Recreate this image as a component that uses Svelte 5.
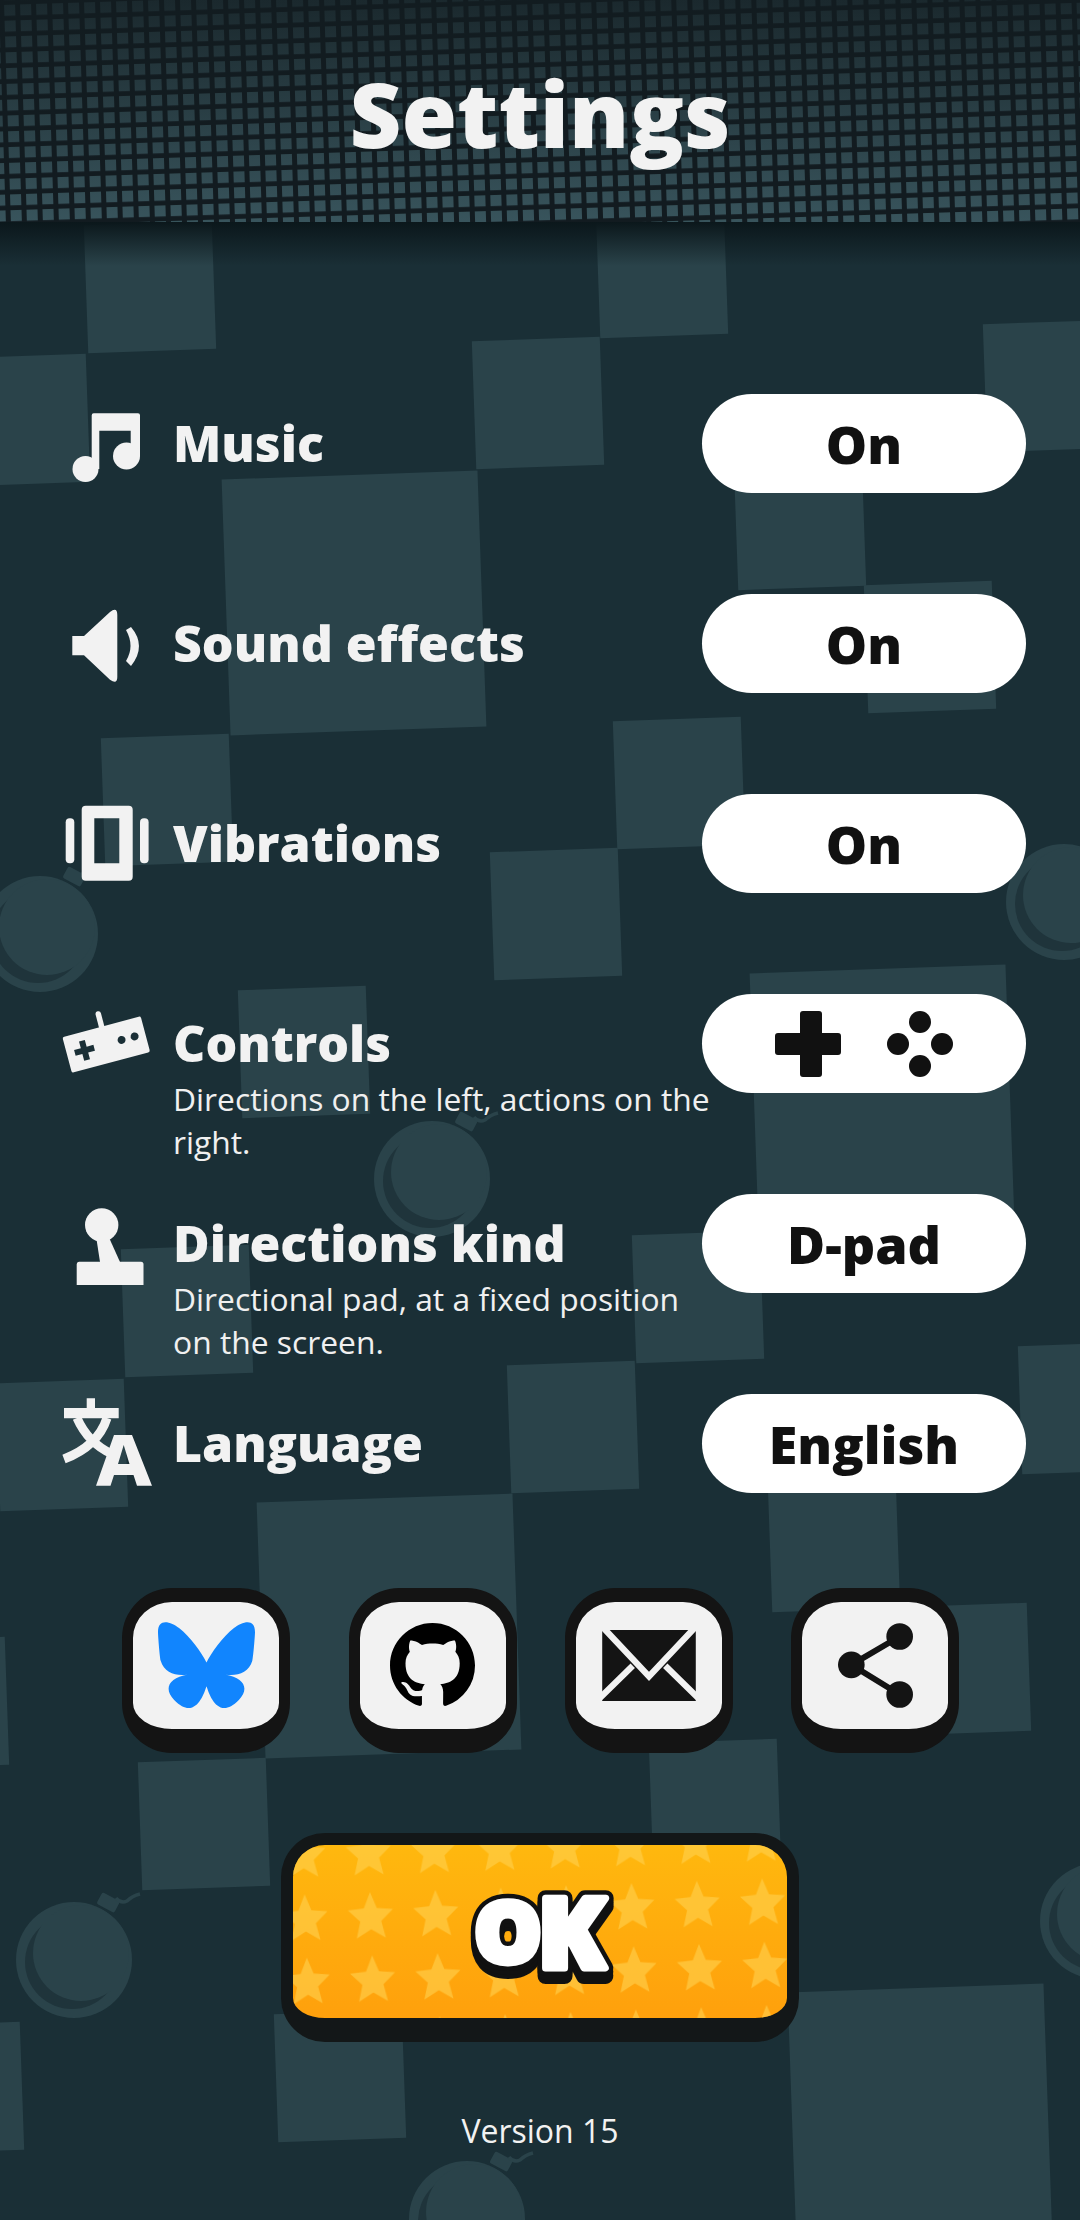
<script>
  const S = 1.4154;
  const small = [[106,203],[17,297],[380,285],[468,192],[741,273],[565,370],[657,457],[118,565],[480,553],[393,646],[215,743],[493,916],[132,926],[44,1021],[405,1008],[766,995],[589,1092],[682,1179],[-40,1203],[144,1289],[505,1275],[240,1467],[-30,1475]];
  const big = [[250,426],[623,775],[275,1149],[650,1495]];
  const squares = [
    ...small.map(([x,y]) => ({ x: x*S - 64, y: y*S - 64, s: 128 })),
    ...big.map(([x,y]) => ({ x: x*S - 128, y: y*S - 128, s: 256 }))
  ];
  const bombs = [[28,660],[305,833],[752,637],[52,1385],[776,1357],[330,1568]].map(([x,y]) => ({ x: x*S - 70, y: y*S - 70 }));
</script>

<div class="page">
  <div class="decor" aria-hidden="true">
    {#each squares as q}
      <div class="sq" style="left:{q.x}px;top:{q.y}px;width:{q.s}px;height:{q.s}px"></div>
    {/each}
    {#each bombs as b}
      <svg class="bomb" style="left:{b.x}px;top:{b.y}px" width="140" height="140" viewBox="-70 -70 140 140">
        <circle r="58" fill="#2a434a"/>
        <circle cx="-2" cy="2" r="47" fill="#1f343b"/>
        <circle cx="7" cy="-7" r="48" fill="#2a434a"/>
        <rect x="24" y="-64" width="20" height="13" rx="2" transform="rotate(28 34 -57)" fill="#2a434a"/>
        <path d="M42 -62 Q47 -56 53 -59 Q58 -64 66 -66" fill="none" stroke="#2a434a" stroke-width="3.500"/>
      </svg>
    {/each}
  </div>

  <header class="head">
    <svg class="dots" width="1080" height="222" aria-hidden="true">
      <defs>
        <pattern id="grid" width="16" height="15.800" patternUnits="userSpaceOnUse" patternTransform="translate(2,3) rotate(-1.800)">
          <rect x="2" y="2" width="11" height="11" fill="#38545c"/>
        </pattern>
        <linearGradient id="fade" x1="0" y1="0" x2="0" y2="1">
          <stop offset="0" stop-color="#121c20" stop-opacity=".78"/>
          <stop offset="1" stop-color="#121c20" stop-opacity="0"/>
        </linearGradient>
      </defs>
      <rect width="1080" height="222" fill="#121b20"/>
      <rect width="1080" height="222" fill="url(#grid)"/>
      <rect width="1080" height="222" fill="url(#fade)"/>
    </svg>
    <h1>Settings</h1>
  </header>
  <div class="head-shadow"></div>

  <main class="content">
    <section class="rows">
      <div class="row">
        <svg class="ico" viewBox="0 0 100 99">
          <path d="M31.7 75V21.3a2 2 0 0 1 2-2H78a2 2 0 0 1 2 2V62H70.7V36.7H39.3V75Z"/>
          <circle cx="25.5" cy="75" r="13"/><circle cx="66.5" cy="62" r="13.5"/>
        </svg>
        <div class="txt"><div class="lbl">Music</div></div>
        <button class="pill">On</button>
      </div>

      <div class="row">
        <svg class="ico" viewBox="0 0 100 99">
          <path d="M12.3 42H24L50 18Q57.3 12.500 57.300 21V83Q57.300 91 50 85.700L24 61.300H12.300Z"/>
          <path d="M66 36L71 33Q87 52 71 72L66 67Q75 52 66 36Z"/>
        </svg>
        <div class="txt"><div class="lbl">Sound effects</div></div>
        <button class="pill">On</button>
      </div>

      <div class="row">
        <svg class="ico" viewBox="0 0 100 99">
          <path fill-rule="evenodd" d="M25.700 11.700H68.700a4 4 0 0 1 4 4V82.700a4 4 0 0 1-4 4H25.700a4 4 0 0 1-4-4V15.700a4 4 0 0 1 4-4ZM34.300 24.300V69.300H59.300V24.300Z"/>
          <rect x="5.700" y="24.300" width="8.600" height="45" rx="4"/>
          <rect x="80" y="24.300" width="8.600" height="45" rx="4"/>
        </svg>
        <div class="txt"><div class="lbl">Vibrations</div></div>
        <button class="pill">On</button>
      </div>

      <div class="row">
        <svg class="ico" viewBox="0 0 100 99">
          <path d="M38.300 20L41.700 33" stroke="#f2f2f2" stroke-width="5.500" stroke-linecap="round"/>
          <g transform="rotate(-15 46.500 51.500)">
            <path fill-rule="evenodd" d="M8 32H85a2 2 0 0 1 2 2V67a2 2 0 0 1-2 2H8a2 2 0 0 1-2-2V34a2 2 0 0 1 2-2ZM21 40.500V47.500H14V53.500H21V60.500H27V53.500H34V47.500H27V40.500ZM62.500 46a4 4 0 1 0 .01 0ZM76 46a4 4 0 1 0 .01 0Z"/>
          </g>
        </svg>
        <div class="txt">
          <div class="lbl">Controls</div>
          <p class="desc">Directions on the left, actions on the right.</p>
        </div>
        <button class="pill">
          <svg class="pad" width="178" height="66" viewBox="0 0 178 66">
            <path d="M25 3a3 3 0 0 1 3-3H44a3 3 0 0 1 3 3V22H63a3 3 0 0 1 3 3V41a3 3 0 0 1-3 3H47V63a3 3 0 0 1-3 3H28a3 3 0 0 1-3-3V44H3a3 3 0 0 1-3-3V25a3 3 0 0 1 3-3H25Z"/>
            <circle cx="145" cy="11" r="11"/><circle cx="123" cy="33" r="11"/><circle cx="167" cy="33" r="11"/><circle cx="145" cy="55" r="11"/>
          </svg>
        </button>
      </div>

      <div class="row">
        <svg class="ico" viewBox="0 0 100 99">
          <circle cx="41.700" cy="31" r="16.700"/>
          <path d="M36 42H48.300L60 68H40Z"/>
          <path d="M19 67.700H81a2.500 2.500 0 0 1 2.500 2.500V91H16.700V70.200a2.500 2.500 0 0 1 2.300-2.500Z"/>
        </svg>
        <div class="txt">
          <div class="lbl">Directions kind</div>
          <p class="desc">Directional pad, at a fixed position on the screen.</p>
        </div>
        <button class="pill">D-pad</button>
      </div>

      <div class="row last">
        <svg class="ico" viewBox="0 0 100 99">
          <path d="M26.700 4.300H35V14H58.700V24.300H4V14H26.700Z"/>
          <path d="M17 24Q28 49 52 60M47 24Q38 52 4 65" fill="none" stroke="#f2f2f2" stroke-width="9"/>
          <path fill-rule="evenodd" d="M54 41H72L92 91.700H77L73.500 81H54L50.500 91.700H36ZM58 70H69.500L63.700 51Z"/>
        </svg>
        <div class="txt"><div class="lbl">Language</div></div>
        <button class="pill">English</button>
      </div>
    </section>

    <nav class="social">
      <button class="sb" aria-label="Bluesky">
        <svg width="97" height="87" viewBox="0 0 64 57"><path fill="#1185fe" d="M13.873 3.805C21.21 9.332 29.103 20.537 32 26.55v15.882c0-.338-.13.044-.41.867-1.512 4.456-7.418 21.847-20.923 7.944-7.111-7.32-3.819-14.64 9.125-16.85-7.405 1.264-15.73-.825-18.014-9.015C1.12 23.022 0 8.51 0 6.55 0-3.268 8.579-.182 13.873 3.805ZM50.127 3.805C42.79 9.332 34.897 20.537 32 26.55v15.882c0-.338.13.044.41.867 1.512 4.456 7.418 21.847 20.923 7.944 7.111-7.32 3.819-14.64-9.125-16.85 7.405 1.264 15.73-.825 18.014-9.015C62.88 23.022 64 8.51 64 6.55c0-9.818-8.578-6.732-13.873-2.745Z"/></svg>
      </button>
      <button class="sb" aria-label="GitHub">
        <svg width="85" height="85" viewBox="0 0 16 16"><path fill="#000" d="M8 0C3.58 0 0 3.58 0 8c0 3.54 2.29 6.53 5.47 7.59.4.07.55-.17.55-.38 0-.19-.01-.82-.01-1.49-2.01.37-2.53-.49-2.69-.94-.09-.23-.48-.94-.82-1.13-.28-.15-.68-.52-.01-.53.63-.01 1.08.58 1.23.82.72 1.21 1.87.87 2.33.66.07-.52.28-.87.51-1.07-1.78-.2-3.64-.89-3.64-3.95 0-.87.31-1.59.82-2.15-.08-.2-.36-1.02.08-2.12 0 0 .67-.21 2.2.82.64-.18 1.32-.27 2-.27.68 0 1.36.09 2 .27 1.53-1.04 2.2-.82 2.2-.82.44 1.1.16 1.92.08 2.12.51.56.82 1.27.82 2.15 0 3.07-1.87 3.75-3.65 3.95.29.25.54.73.54 1.48 0 1.07-.01 1.93-.01 2.2 0 .21.15.46.55.38A8.013 8.013 0 0016 8c0-4.42-3.58-8-8-8z"/></svg>
      </button>
      <button class="sb mail" aria-label="Email">
        <svg width="94" height="71" viewBox="0 0 282 214">
          <rect width="282" height="214" fill="#141414"/>
          <path d="M4 -6L141 140L278 -6M-8 206L92 108M290 206L190 108" fill="none" stroke="#f2f2f2" stroke-width="19"/>
        </svg>
      </button>
      <button class="sb" aria-label="Share">
        <svg width="75" height="85" viewBox="0 0 225 254">
          <path d="M185 40L40 125L185 214" fill="none" stroke="#141414" stroke-width="18"/>
          <circle cx="185" cy="40" r="40" fill="#141414"/><circle cx="40" cy="125" r="40" fill="#141414"/><circle cx="185" cy="214" r="40" fill="#141414"/>
        </svg>
      </button>
    </nav>

    <div class="ok-wrap">
      <button class="ok">
        <svg class="stars" width="494" height="173" aria-hidden="true">
          <defs>
            <pattern id="star" width="65.400" height="63.300" patternUnits="userSpaceOnUse" patternTransform="translate(44,40.400) rotate(-2)">
              <polygon fill="#ffd04e" fill-opacity=".62" points="32.700,8 39,24 55,25.500 43,37 47,54 32.700,45 18,54 22,37 10,25.500 26,24"/>
            </pattern>
          </defs>
          <rect width="494" height="173" fill="url(#star)"/>
        </svg>
        <svg class="ok-label" width="178" height="120" viewBox="0 0 178 120">
          <use href="#okt" transform="translate(0,8)" fill="#111" stroke="#111" stroke-width="16"/>
          <use href="#okt" transform="translate(0,4)" fill="#111" stroke="#111" stroke-width="16"/>
          <use href="#okt" fill="#111" stroke="#111" stroke-width="16"/>
          <g fill="#fff" stroke="#fff" stroke-width="7">
            <text id="okt" stroke-linejoin="round" font-family="Open Sans, sans-serif" font-weight="800"><tspan x="23.600" y="89.500" font-size="84">O</tspan><tspan x="87" y="95.500" font-size="98">K</tspan></text>
          </g>
        </svg>
      </button>
    </div>

    <p class="version">Version 15</p>
  </main>
</div>

<style>
  :global(body) { margin: 0; background: #1a2f36; }
  .page {
    position: relative;
    width: 1080px;
    height: 2220px;
    overflow: hidden;
    background: #1a2f36;
    font-family: "Open Sans", "Noto Sans", sans-serif;
    color: #f2f2f2;
  }
  .decor { position: absolute; inset: 0; }
  .sq { position: absolute; background: #2a434a; transform: rotate(-2deg); }
  .bomb { position: absolute; overflow: visible; }
  .head {
    position: relative;
    height: 222px;
    display: flex;
    align-items: center;
    justify-content: center;
    overflow: hidden;
  }
  .dots { position: absolute; left: 0; top: 0; }
  h1 {
    position: relative;
    margin: 0;
    padding-top: 4px;
    font-size: 90px;
    font-weight: 800;
    line-height: 1.2;
    color: #f2f2f2;
  }
  .head-shadow {
    position: absolute;
    left: 0; right: 0; top: 222px;
    height: 44px;
    background: linear-gradient(#0b171b, rgba(11,23,27,0));
  }
  .content { position: relative; }
  .rows { padding: 172px 54px 0 60px; }
  .row {
    display: flex;
    align-items: flex-start;
    height: 200px;
  }
  .row.last { height: 194px; }
  .ico { width: 100px; height: 99px; flex: none; fill: #f2f2f2; }
  .txt { flex: 1; min-width: 0; margin-left: 13px; }
  .lbl { font-size: 50px; font-weight: 800; line-height: 99px; white-space: nowrap; }
  .desc {
    margin: -16px 0 0;
    width: 545px;
    font-size: 31.800px;
    line-height: 43px;
    position: relative;
    color: #f0f0f0;
  }
  .pill {
    flex: none;
    width: 324px;
    height: 99px;
    margin-left: -10px;
    position: relative;
    border: 0;
    border-radius: 50px;
    background: #fff;
    color: #111;
    font-family: inherit;
    font-size: 52px;
    font-weight: 800;
    display: flex;
    align-items: center;
    justify-content: center;
    padding: 0;
  }
  .pad { fill: #111; }
  .social {
    display: flex;
    gap: 58.500px;
    padding-left: 122px;
  }
  .sb {
    width: 168px;
    height: 165px;
    box-sizing: border-box;
    padding: 0;
    background: #f2f2f2;
    border: solid #141414;
    border-width: 14px 11px 24px;
    border-radius: 50px;
    display: flex;
    align-items: center;
    justify-content: center;
  }
  .sb.mail { margin-left: -10.500px; }
  .ok-wrap { display: flex; justify-content: center; padding-top: 80px; }
  .ok {
    position: relative;
    width: 518px;
    height: 209px;
    box-sizing: border-box;
    padding: 0;
    border: solid #131718;
    border-width: 12px 12px 24px;
    border-radius: 44px;
    background: linear-gradient(#ffb80e, #ffa00c);
    overflow: hidden;
    display: flex;
    align-items: center;
    justify-content: center;
    font-family: inherit;
  }
  .stars { position: absolute; left: 0; top: 0; }
  .ok-label { position: relative; overflow: visible; }
  .version {
    margin: 0;
    padding-top: 67px;
    text-align: center;
    font-size: 32px;
    line-height: 44px;
    color: #f2f2f2;
  }
</style>
